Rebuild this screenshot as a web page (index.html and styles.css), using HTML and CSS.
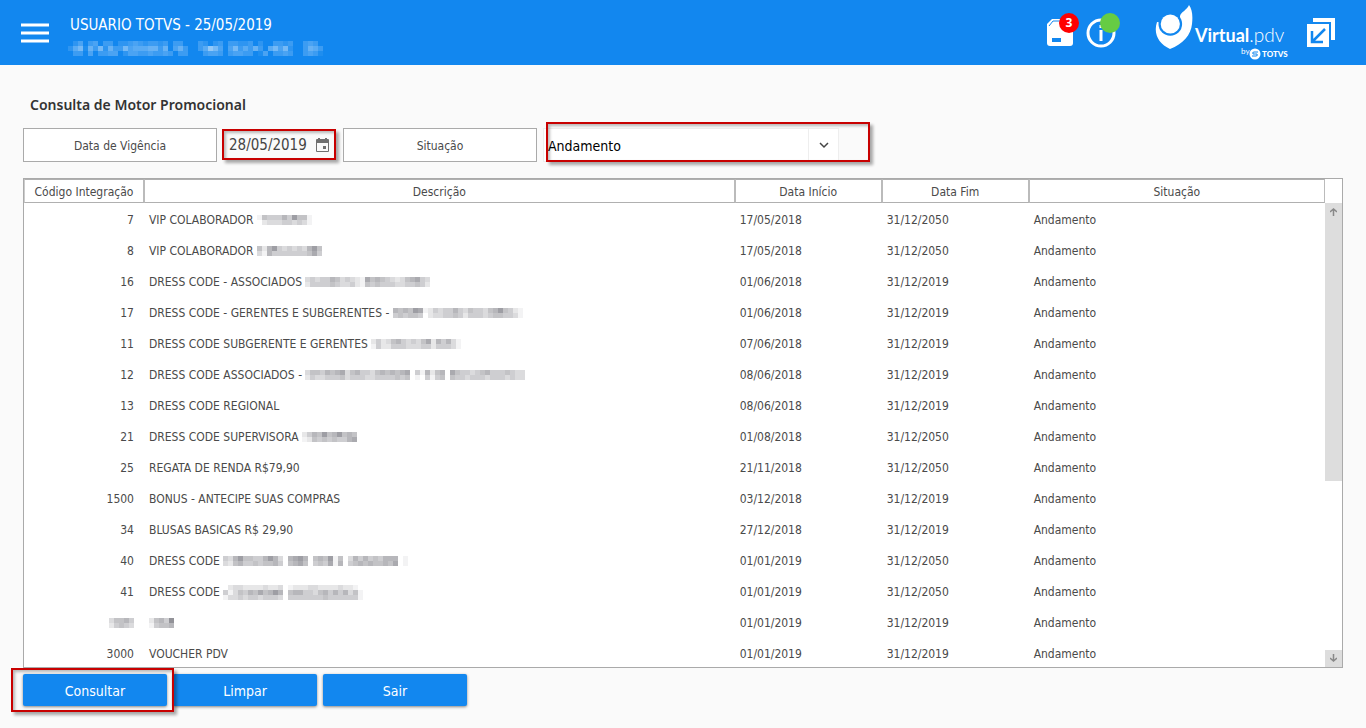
FILE: index.html
```html
<!DOCTYPE html>
<html lang="pt-BR">
<head>
<meta charset="utf-8">
<title>Consulta de Motor Promocional</title>
<link rel="stylesheet" href="styles.css">
</head>
<body>
<header class="topbar">
  <button class="icon-button menu" type="button" aria-label="Menu">
    <svg width="28" height="20" viewBox="0 0 28 20"><path d="M0 2h28M0 10h28M0 18h28" stroke="#fff" stroke-width="3"/></svg>
  </button>
  <div class="session">
    <div class="session-user">USUARIO TOTVS - 25/05/2019</div>
    <svg class="mosaic mosaic-light" data-rows="024034033022343233230330003202303322302003323003430,257163726337455566360463003597404735363057472003653,033040334402443343343033000344303443301403343003431"></svg>
  </div>
  <nav class="tools">
    <button class="icon-button box" type="button" aria-label="Pendências">
      <svg width="27" height="28" viewBox="0 0 27 28"><path d="M5 0h17l4 5v19q0 3-3 3H3q-3 0-3-3V5z" fill="#fff"/><path d="M2 7l4-5h15l4 5" fill="none" stroke="#1287ef"/><path d="M5 19h9v4H5z" fill="#1287ef"/></svg>
      <span class="badge">3</span>
    </button>
    <button class="icon-button info" type="button" aria-label="Informações">
      <svg width="30" height="30" viewBox="0 0 30 30"><circle cx="15" cy="15" r="13" fill="none" stroke="#fff" stroke-width="3"/><path d="M15 7v3M15 12v11" stroke="#fff" stroke-width="3"/></svg>
      <span class="status"></span>
    </button>
    <svg class="logo" width="134" height="65" viewBox="0 0 134 65" role="img" aria-label="Virtual.pdv by TOTVS">
      <path d="M2 22C-2 34 4 44 15 49c13-5 21-14 22-25 1-9 0-15-3-19-2 5-8 7-9 11v8z" fill="#fff"/>
      <circle cx="15.300" cy="24" r="11.800" fill="#1287ef"/>
      <circle cx="15.300" cy="24" r="9.600" fill="#fff"/>
      <text x="40" y="42" class="logo-name"><tspan class="logo-strong">Virtual</tspan><tspan class="logo-light">.pdv</tspan></text>
      <text x="86" y="54" class="logo-by">by</text>
      <circle cx="100" cy="54" r="5.500" fill="#fff"/>
      <path d="M103 52h-4q-2 0-1 2h4q1 2-1 2h-4" fill="none" stroke="#1287ef"/>
      <text x="107" y="57" class="logo-totvs">TOTVS</text>
    </svg>
    <button class="icon-button restore" type="button" aria-label="Restaurar">
      <svg width="28" height="29" viewBox="0 0 28 29"><path d="M6 0h22v22h-4V4H6z" fill="#fff"/><path d="M0 6h22v23H0z" fill="#fff"/><path d="M18 11L6 23M5 13v11h11" fill="none" stroke="#1287ef" stroke-width="2.500"/></svg>
    </button>
  </nav>
</header>
<main class="page">
  <h1 class="title">Consulta de Motor Promocional</h1>
  <form class="filters">
    <label class="caption" for="vigencia">Data de Vigência</label>
    <div class="date-field">
      <input class="date-input" id="vigencia" type="text" value="28/05/2019">
      <svg class="calendar" width="13" height="14" viewBox="0 0 13 14"><path d="M2 0h2v1h5V0h2v1h1q1 0 1 1v11q0 1-1 1H1q-1 0-1-1V2q0-1 1-1h1zM1 5v8h11V5z" fill="#707070" fill-rule="evenodd"/><path d="M7 8h3v3H7z" fill="#707070"/></svg>
      <span class="mark mark-date"></span>
    </div>
    <label class="caption" for="situacao">Situação</label>
    <div class="select-field">
      <select class="select" id="situacao"><option>Andamento</option></select>
      <span class="arrow"><svg width="10" height="7" viewBox="0 0 10 7"><path d="M1 1l4 4 4-4" fill="none" stroke="#444" stroke-width="1.500"/></svg></span>
      <span class="mark mark-select"></span>
    </div>
  </form>
  <section class="grid">
    <div class="grid-view">
      <table class="table">
        <colgroup><col class="c-code"><col class="c-desc"><col class="c-date"><col class="c-date"><col class="c-state"></colgroup>
        <thead><tr><th>Código Integração</th><th>Descrição</th><th>Data Início</th><th>Data Fim</th><th>Situação</th></tr></thead>
        <tbody>
          <tr><td>7</td><td>VIP COLABORADOR <svg class="mosaic" data-rows="15444648551,02333443431"></svg></td><td>17/05/2018</td><td>31/12/2050</td><td>Andamento</td></tr>
          <tr><td>8</td><td>VIP COLABORADOR <svg class="mosaic" data-rows="5268434343685,3164444444574"></svg></td><td>17/05/2018</td><td>31/12/2050</td><td>Andamento</td></tr>
          <tr><td>16</td><td>DRESS CODE - ASSOCIADOS <svg class="mosaic" data-rows="34344653432175654323567430,24444543342154544433445420"></svg></td><td>01/06/2018</td><td>31/12/2019</td><td>Andamento</td></tr>
          <tr><td>17</td><td>DRESS CODE - GERENTES E SUBGERENTES - <svg class="mosaic" data-rows="65658712434464354435685421,45455402334454244434554431"></svg></td><td>01/06/2018</td><td>31/12/2019</td><td>Andamento</td></tr>
          <tr><td>11</td><td>DRESS CODE SUBGERENTE E GERENTES <svg class="mosaic" data-rows="242356434357264631,142244433344244431"></svg></td><td>07/06/2018</td><td>31/12/2019</td><td>Andamento</td></tr>
          <tr><td>12</td><td>DRESS CODE ASSOCIADOS - <svg class="mosaic" data-rows="35546567356443565656704162560754434564445433,24334445344433444454501041450544344434443433"></svg></td><td>08/06/2018</td><td>31/12/2019</td><td>Andamento</td></tr>
          <tr><td>13</td><td>DRESS CODE REGIONAL</td><td>08/06/2018</td><td>31/12/2019</td><td>Andamento</td></tr>
          <tr><td>21</td><td>DRESS CODE SUPERVISORA <svg class="mosaic" data-rows="24658568565,12545454467"></svg></td><td>01/08/2018</td><td>31/12/2050</td><td>Andamento</td></tr>
          <tr><td>25</td><td>REGATA DE RENDA R$79,90</td><td>21/11/2018</td><td>31/12/2050</td><td>Andamento</td></tr>
          <tr><td>1500</td><td>BONUS - ANTECIPE SUAS COMPRAS</td><td>03/12/2018</td><td>31/12/2019</td><td>Andamento</td></tr>
          <tr><td>34</td><td>BLUSAS BASICAS R$ 29,90</td><td>27/12/2018</td><td>31/12/2019</td><td>Andamento</td></tr>
          <tr><td>40</td><td>DRESS CODE <svg class="mosaic" data-rows="4368554468630678605658150364645466601,3256445455640567504547160456565565701"></svg></td><td>01/01/2019</td><td>31/12/2050</td><td>Andamento</td></tr>
          <tr><td>41</td><td>DRESS CODE <svg class="mosaic" data-rows="0233222232230122233222232210,4135465756860566443564646351,1334344344430444444454444441"></svg></td><td>01/01/2019</td><td>31/12/2050</td><td>Andamento</td></tr>
          <tr><td><svg class="mosaic" data-rows="35564,24543"></svg></td><td><svg class="mosaic" data-rows="25649,14556"></svg></td><td>01/01/2019</td><td>31/12/2019</td><td>Andamento</td></tr>
          <tr><td>3000</td><td>VOUCHER PDV</td><td>01/01/2019</td><td>31/12/2019</td><td>Andamento</td></tr>
        </tbody>
      </table>
    </div>
    <div class="scrollbar">
      <div class="scroll-thumb"><svg width="7" height="8" viewBox="0 0 7 8"><path d="M3.500 8V1M0 4l3.500-3L7 4" fill="none" stroke="#888" stroke-width="1.500"/></svg></div>
      <div class="scroll-end"><svg width="7" height="8" viewBox="0 0 7 8"><path d="M3.500 0v7M0 4l3.500 3L7 4" fill="none" stroke="#888" stroke-width="1.500"/></svg></div>
    </div>
  </section>
  <footer class="actions">
    <div class="action-marked"><button class="action" type="button">Consultar</button><span class="mark mark-action"></span></div>
    <button class="action" type="button">Limpar</button>
    <button class="action" type="button">Sair</button>
  </footer>
</main>
<script src="mosaic.js"></script>
</body>
</html>
```
FILE: styles.css
```css
* { box-sizing: border-box; }
body {
  margin: 0;
  height: 100vh;
  display: flex;
  flex-direction: column;
  overflow: hidden;
  background: #fafafa;
  color: #4a4a4a;
  font: 12px/16px "DejaVu Sans Condensed", "Noto Sans", sans-serif;
}
button, input, select { font-family: inherit; margin: 0; }
.topbar {
  flex: none;
  height: 65px;
  padding: 0 31px 0 21px;
  display: flex;
  align-items: center;
  background: #1287ef;
  color: #fff;
}
.icon-button { position: relative; padding: 0; border: 0; background: none; display: block; }
.icon-button svg { display: block; }
.session { margin-left: 19px; padding-top: 6px; }
.session-user { font-size: 15px; line-height: 20px; padding: 0 0 6px 2px; }
.mosaic { display: inline-block; vertical-align: middle; color: #686870; }
.mosaic-light { display: block; color: #fff; }
.tools { margin-left: auto; display: flex; align-items: center; }
.badge {
  position: absolute;
  top: -6px;
  right: -5px;
  width: 20px;
  height: 20px;
  border-radius: 50%;
  background: #f00;
  color: #fff;
  font: bold 12px/20px "Noto Sans", sans-serif;
  text-align: center;
}
.info { margin: 0 39px 0 12px; }
.status { position: absolute; top: -5px; right: -4px; width: 20px; height: 20px; border-radius: 50%; background: #6c4; }
.logo { margin-right: 18px; fill: #fff; }
.logo-name { font: 18px Lato, sans-serif; }
.logo-strong { font-weight: 700; }
.logo-light { font-size: 19px; font-weight: 300; }
.logo-by { font: 8px Lato, sans-serif; }
.logo-totvs { font: 900 8px Lato, sans-serif; }
.page { flex: 1; min-height: 0; display: flex; flex-direction: column; padding: 30px 23px 22px; }
.title { margin: 0 7px 13px; font: 600 14px/20px "Noto Sans", sans-serif; color: #333; }
.filters { display: flex; gap: 6px; margin-bottom: 16px; }
.caption {
  width: 194px;
  height: 34px;
  display: flex;
  align-items: center;
  justify-content: center;
  padding-top: 2px;
  background: #fff;
  border: 1px solid #aaa;
}
.date-field { position: relative; width: 114px; display: flex; align-items: center; padding: 0 7px 0 6px; }
.date-input { width: 87px; padding: 0; border: 0; background: none; font-size: 15px; line-height: 20px; color: #444; }
.select-field { position: relative; width: 296px; height: 34px; display: flex; }
.select { flex: 1; appearance: none; padding: 2px 4px 0; border: 1px solid #eee; border-radius: 0; background: #fff; color: #000; font-size: 14px; }
.arrow { width: 30px; display: flex; align-items: center; justify-content: center; background: #fff; border: 1px solid #eee; border-left: 0; pointer-events: none; }
.mark { position: absolute; border: 2px solid #c80000; box-shadow: 3px 3px 3px #0005, inset 2px 2px 3px #0004; pointer-events: none; }
.mark-date { inset: 1px 1px 2px -1px; }
.mark-select { inset: -6px -31px 0 3px; }
.mark-action { inset: -6px -7px -6px -12px; }
.grid { flex: 1; min-height: 0; display: flex; background: #fff; border: 1px solid #aaa; }
.grid-view { flex: 1; min-width: 0; overflow: hidden; }
.table { width: 100%; table-layout: fixed; border-collapse: separate; border-spacing: 0; }
.c-code { width: 9.3%; }
.c-desc { width: 45.4%; }
.c-date { width: 11.3%; }
.c-state { width: 22.7%; }
.table th { height: 24px; padding: 1px 0 0; font-weight: 400; text-align: center; border: 1px solid #b0b0b0; border-right: 2px solid #bbb; border-left: 0; }
.table th:first-child { border-left: 1px solid #ccc; }
.table th:last-child { border-right-width: 1px; }
.table td { height: 31px; padding: 2px 4px 0; white-space: nowrap; }
.table td:first-child { text-align: right; padding-right: 11px; }
.scrollbar { width: 17px; padding-top: 24px; display: flex; flex-direction: column; justify-content: space-between; }
.scroll-thumb { height: 60%; padding-top: 5px; background: #ddd; text-align: center; line-height: 8px; }
.scroll-end { height: 17px; padding-top: 4px; background: #ddd; text-align: center; line-height: 8px; }
.actions { display: flex; gap: 6px; padding-top: 6px; }
.action-marked { position: relative; z-index: 1; }
.action {
  display: block;
  width: 144px;
  height: 32px;
  padding: 2px 0 0;
  border: 0;
  border-radius: 2px;
  background: #1287ef;
  box-shadow: 0 1px 3px #0007;
  color: #fff;
  font-size: 14px;
}
```
FILE: mosaic.js
```js
const CELL = 5;
const NS = "http://www.w3.org/2000/svg";

// Each digit of data-rows is the tone of one cell, 0 (clear) to 9 (strong).
document.querySelectorAll(".mosaic").forEach((svg) => {
  const rows = svg.dataset.rows.split(",");
  svg.setAttribute("width", rows[0].length * CELL);
  svg.setAttribute("height", rows.length * CELL);
  const strength = svg.classList.contains("mosaic-light") ? 0.06 : 0.08;
  rows.forEach((row, y) => {
    [...row].forEach((tone, x) => {
      const cell = document.createElementNS(NS, "rect");
      cell.setAttribute("x", x * CELL);
      cell.setAttribute("y", y * CELL);
      cell.setAttribute("width", CELL);
      cell.setAttribute("height", CELL);
      cell.setAttribute("fill", "currentColor");
      cell.setAttribute("opacity", tone * strength);
      svg.append(cell);
    });
  });
});
```
